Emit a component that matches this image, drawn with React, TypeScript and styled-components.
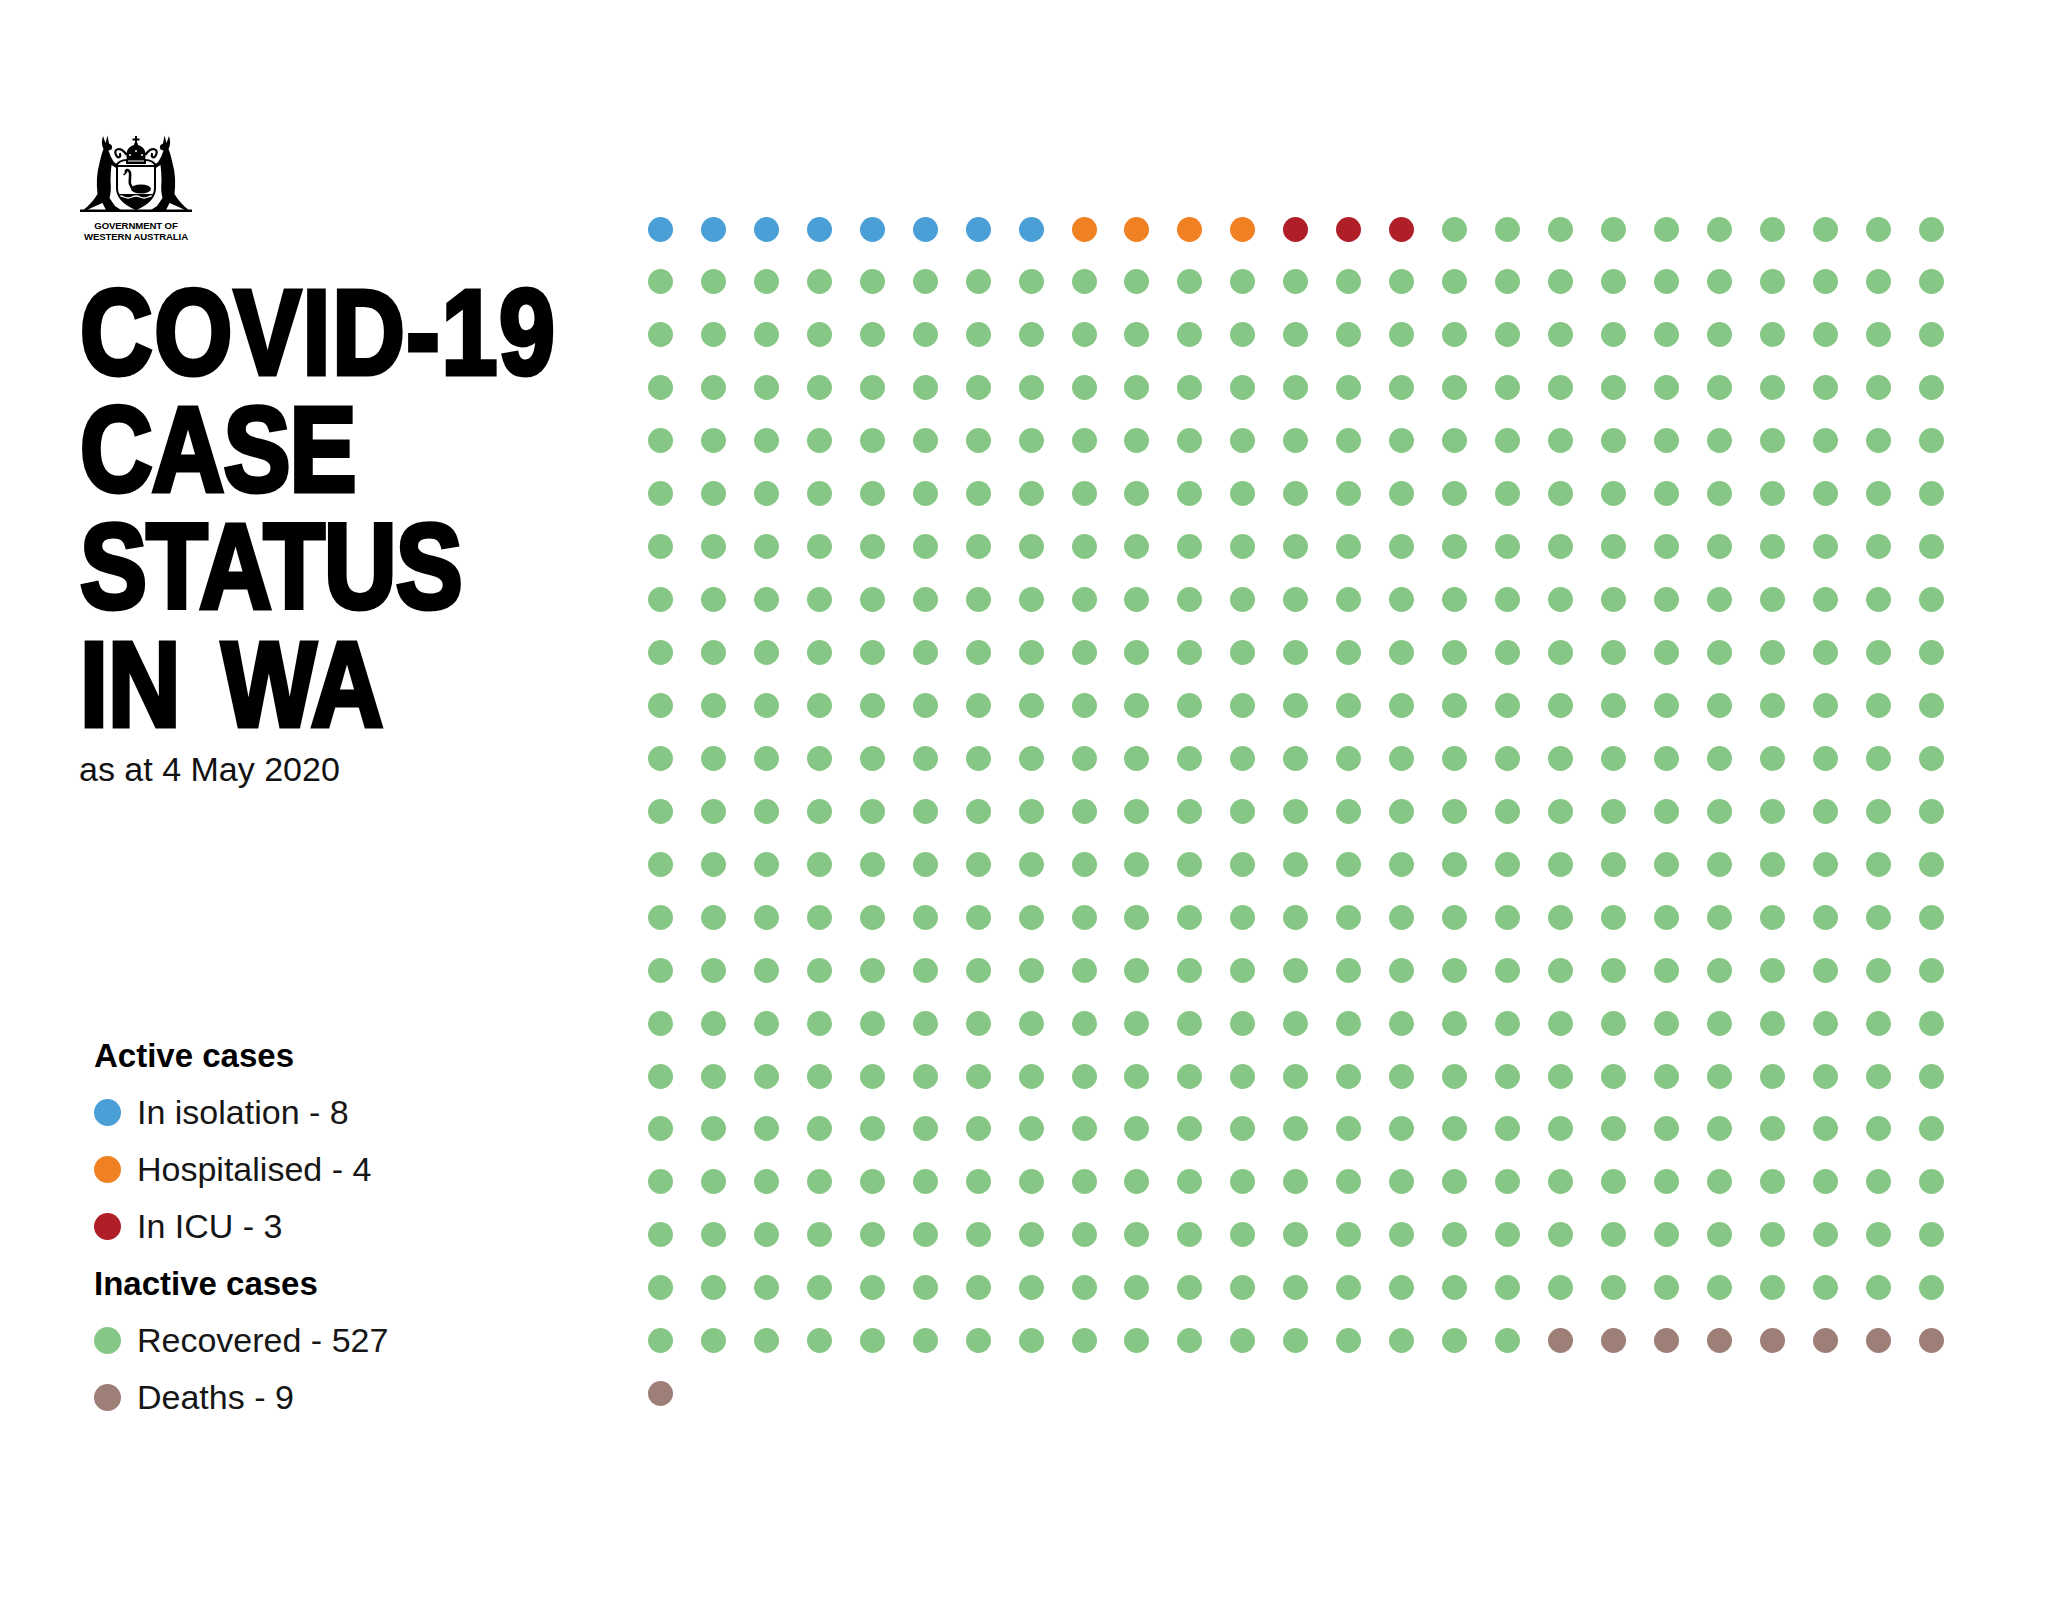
import React from 'react';
import styled, { createGlobalStyle } from 'styled-components';

const COLORS = {
  isolation: '#4a9fd7',
  hospital: '#f08122',
  icu: '#b01f28',
  recovered: '#86c786',
  deaths: '#9d7f77',
};

type Status = keyof typeof COLORS;

const COUNTS: { key: Status; label: string; count: number }[] = [
  { key: 'isolation', label: 'In isolation', count: 8 },
  { key: 'hospital', label: 'Hospitalised', count: 4 },
  { key: 'icu', label: 'In ICU', count: 3 },
  { key: 'recovered', label: 'Recovered', count: 527 },
  { key: 'deaths', label: 'Deaths', count: 9 },
];

// one dot per case, in the order the legend lists them
const cases: Status[] = COUNTS.flatMap((c) => Array(c.count).fill(c.key));

const GlobalStyle = createGlobalStyle`
  html, body {
    margin: 0;
    padding: 0;
    background: #ffffff;
  }
  body {
    font-family: "Liberation Sans", Arial, sans-serif;
    color: #000;
  }
`;

const Page = styled.div`
  display: flex;
  align-items: flex-start;
  width: 2048px;
  min-height: 1605px;
  padding: 133px 0 0 80px;
  box-sizing: border-box;
`;

const Sidebar = styled.div`
  width: 568px;
  flex-shrink: 0;
  display: flex;
  flex-direction: column;
`;

const Logo = styled.div`
  width: 112px;
  display: flex;
  flex-direction: column;
  align-items: center;
`;

const LogoText = styled.div`
  margin-top: 7px;
  font-family: "Liberation Sans", Arial, sans-serif;
  font-weight: 700;
  font-size: 9.6px;
  line-height: 11px;
  text-align: center;
  white-space: nowrap;
  letter-spacing: -0.1px;
`;

const Title = styled.h1`
  margin: 32px 0 0;
  font-family: "Liberation Sans", Arial, sans-serif;
  font-weight: 700;
  font-size: 121px;
  color: #000;
  -webkit-text-stroke: 5px #000;
  transform: scaleX(0.83);
  transform-origin: left top;
  white-space: nowrap;
`;

const TitleLine = styled.span<{ $spacing?: number; $wordSpacing?: number }>`
  display: block;
  height: 117.2px;
  line-height: 117.2px;
  letter-spacing: ${(p) => p.$spacing ?? 0}px;
  word-spacing: ${(p) => p.$wordSpacing ?? 0}px;
`;

const Subtitle = styled.p`
  margin: 6px 0 0 -1px;
  font-size: 34px;
  line-height: 40px;
  font-weight: 400;
  color: #111;
`;

const Legend = styled.div`
  margin: 238px 0 0 14px;
  display: flex;
  flex-direction: column;
`;

const LegendHeading = styled.div`
  font-weight: 700;
  font-size: 33px;
  line-height: 57px;
  height: 57px;
`;

const LegendRow = styled.div`
  display: flex;
  align-items: center;
  height: 57px;
  font-size: 34px;
  line-height: 57px;
  color: #161616;
`;

const Swatch = styled.span<{ $color: string }>`
  width: 27px;
  height: 27px;
  border-radius: 50%;
  background: ${(p) => p.$color};
  margin-right: 16px;
  flex-shrink: 0;
`;

const DotGrid = styled.div`
  margin-top: 83.5px;
  display: grid;
  grid-template-columns: repeat(25, 25px);
  grid-auto-rows: 25px;
  column-gap: 27.94px;
  row-gap: 27.94px;
`;

const Dot = styled.span<{ $color: string }>`
  width: 25px;
  height: 25px;
  border-radius: 50%;
  background: ${(p) => p.$color};
`;

const Kangaroo = () => (
  <path d="M23 3 L25.5 10 L27.5 2.5 L29 10.5 Q33.5 12 31.5 16.5 L28.5 17.5 Q30 23 33.5 28.5 L38.5 33 L37 35.5 L31.5 32 Q30.5 40 30.5 48 Q31.5 58 29.5 65 L35 73 L41 77 L26 77 L22.5 70 Q15 73 5 78 L3.5 77 Q13 69 17.5 61 Q15.5 44 19.5 30 Q21.5 21 23.5 16 Q20.5 11 23 3 Z" />
);

const Crest = () => (
  <svg width="112" height="80" viewBox="0 0 112 80">
    <defs>
      <clipPath id="shield-clip">
        <path d="M37 33 H75 V55 Q75 68 56 76 Q37 68 37 55 Z" />
      </clipPath>
    </defs>
    {/* kangaroo supporters */}
    <g fill="#000">
      <Kangaroo />
      <g transform="translate(112 0) scale(-1 1)">
        <Kangaroo />
      </g>
    </g>
    {/* mantling */}
    <g fill="none" stroke="#000" strokeWidth="2.2" strokeLinecap="round">
      <path d="M46 21 C40 13 33 16 36 22 C38 26 41 24 40 21" />
      <path d="M47 27 C42 27 38 29 36 33" />
      <path d="M66 21 C72 13 79 16 76 22 C74 26 71 24 72 21" />
      <path d="M65 27 C70 27 74 29 76 33" />
    </g>
    {/* crown */}
    <g fill="#000">
      <path d="M47 28 Q45 17 50 14 Q56 9 62 14 Q67 17 65 28 Z" />
      <rect x="46" y="26" width="20" height="5" />
      <rect x="55" y="3" width="2" height="8" />
      <rect x="52.5" y="5.5" width="7" height="2" />
      <circle cx="56" cy="11.5" r="2" />
    </g>
    <g fill="#fff">
      <circle cx="50" cy="22" r="1" />
      <circle cx="56" cy="18" r="1" />
      <circle cx="62" cy="22" r="1" />
      <rect x="48" y="27.5" width="16" height="1" />
    </g>
    {/* shield */}
    <path d="M37 33 H75 V55 Q75 68 56 76 Q37 68 37 55 Z" fill="#fff" />
    <g clipPath="url(#shield-clip)">
      <rect x="30" y="61" width="50" height="20" fill="#000" />
      <path d="M36 64 Q40 62 44 64 T52 64 T60 64 T68 64 T76 64" fill="none" stroke="#fff" strokeWidth="1.3" />
      <ellipse cx="61" cy="56" rx="10" ry="4.5" fill="#000" />
      <path d="M54 56 C47 52 51 45 50 40 C49 36 45 36 46 40" fill="none" stroke="#000" strokeWidth="2.6" />
      <path d="M46 40 L43.5 42" stroke="#000" strokeWidth="1.6" />
    </g>
    <path d="M37 33 H75 V55 Q75 68 56 76 Q37 68 37 55 Z" fill="none" stroke="#000" strokeWidth="2" />
    {/* compartment */}
    <rect x="0" y="76.5" width="112" height="2.5" fill="#000" />
  </svg>
);

const App: React.FC = () => {
  const active = COUNTS.slice(0, 3);
  const inactive = COUNTS.slice(3);

  return (
    <>
      <GlobalStyle />
      <Page>
        <Sidebar>
          <Logo>
            <Crest />
            <LogoText>
              GOVERNMENT OF
              <br />
              WESTERN AUSTRALIA
            </LogoText>
          </Logo>

          <Title>
            <TitleLine $spacing={2}>COVID-19</TitleLine>
            <TitleLine $spacing={-1}>CASE</TitleLine>
            <TitleLine $spacing={-1}>STATUS</TitleLine>
            <TitleLine $wordSpacing={16}>IN WA</TitleLine>
          </Title>
          <Subtitle>as at 4 May 2020</Subtitle>

          <Legend>
            <LegendHeading>Active cases</LegendHeading>
            {active.map((c) => (
              <LegendRow key={c.key}>
                <Swatch $color={COLORS[c.key]} />
                {c.label} - {c.count}
              </LegendRow>
            ))}
            <LegendHeading>Inactive cases</LegendHeading>
            {inactive.map((c) => (
              <LegendRow key={c.key}>
                <Swatch $color={COLORS[c.key]} />
                {c.label} - {c.count}
              </LegendRow>
            ))}
          </Legend>
        </Sidebar>

        <DotGrid>
          {cases.map((status, i) => (
            <Dot key={i} $color={COLORS[status]} />
          ))}
        </DotGrid>
      </Page>
    </>
  );
};

export default App;
